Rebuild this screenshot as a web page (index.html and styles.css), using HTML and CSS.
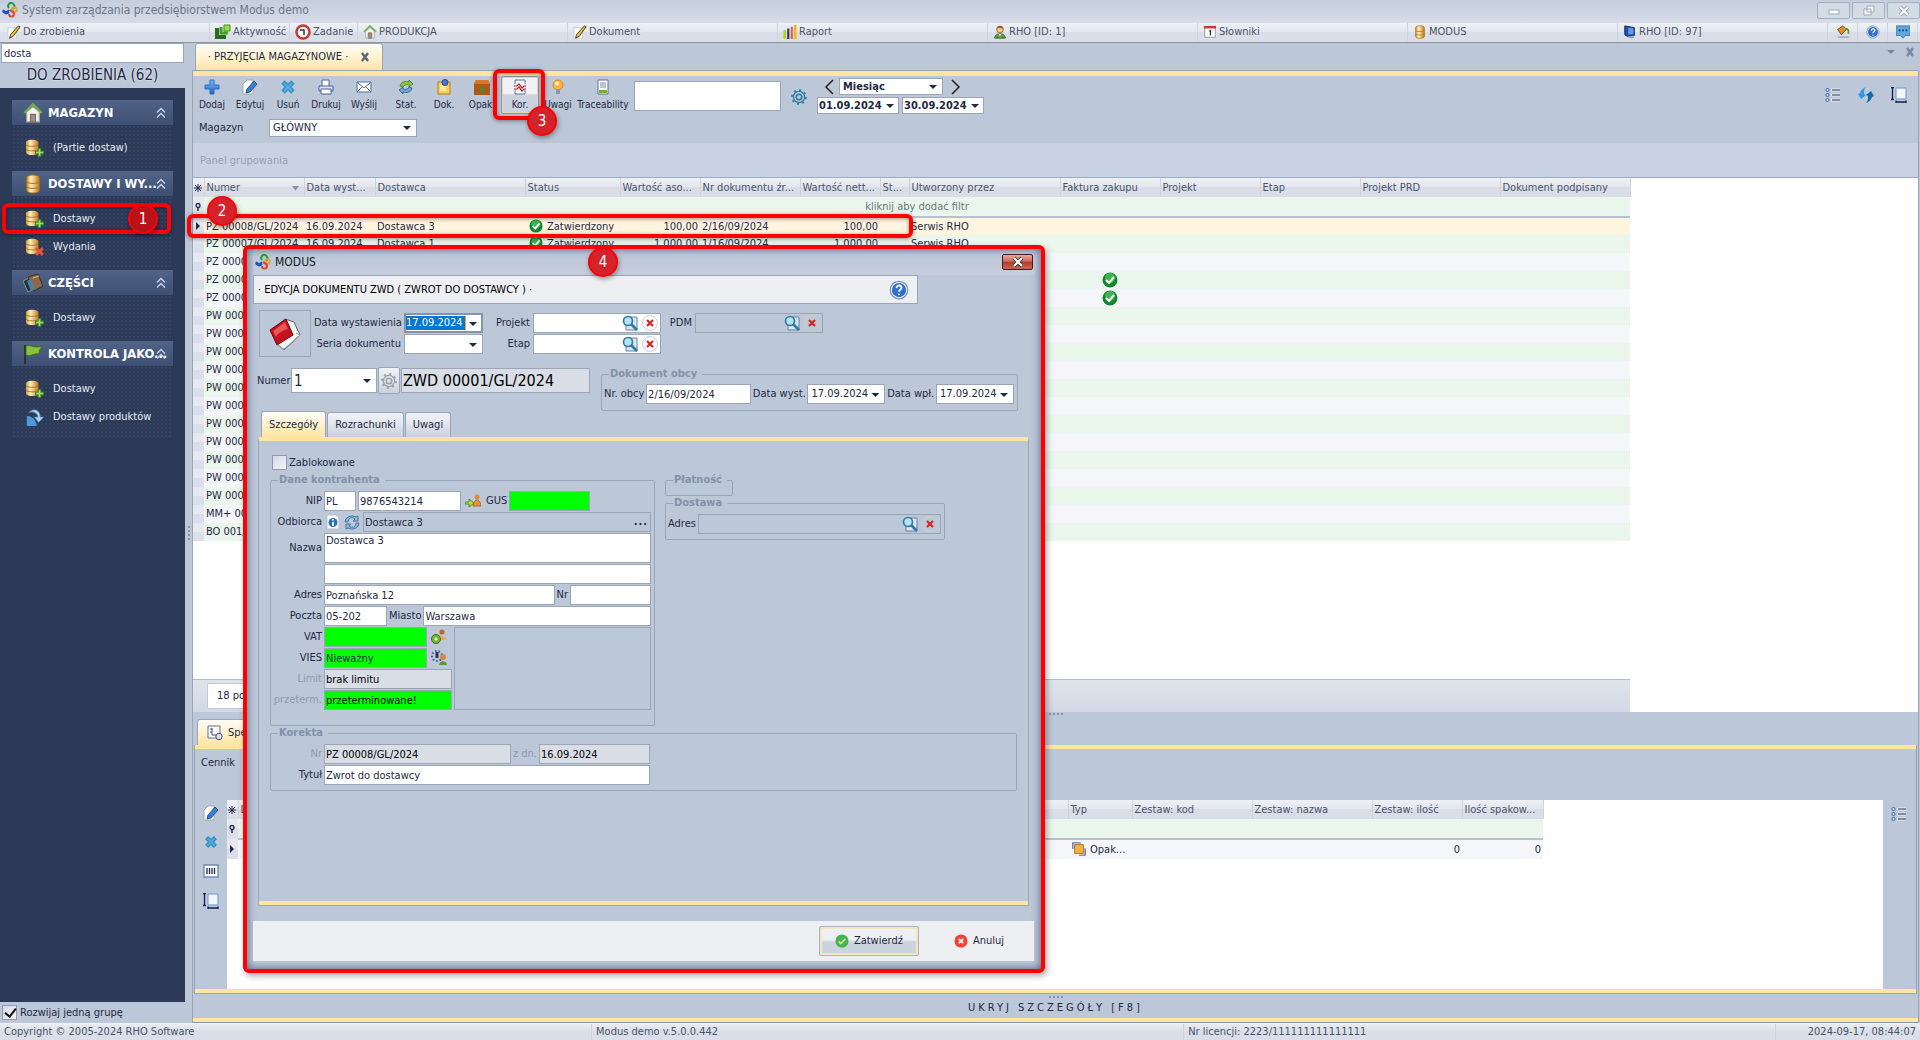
FILE: index.html
```html
<!DOCTYPE html>
<html lang="pl">
<head>
<meta charset="utf-8">
<title>System zarządzania przedsiębiorstwem Modus demo</title>
<link rel="stylesheet" href="styles.css">
</head>
<body>
<svg class="defs" aria-hidden="true">
  <defs>
    <linearGradient id="gold" x1="0" x2="1" y1="0" y2="0"><stop offset="0" stop-color="#d9952f"/><stop offset=".35" stop-color="#fff0bf"/><stop offset="1" stop-color="#c57a1a"/></linearGradient>
    <linearGradient id="blue" x1="0" x2="0" y1="0" y2="1"><stop offset="0" stop-color="#7cc0f5"/><stop offset="1" stop-color="#1c62c4"/></linearGradient>
  </defs>
  <symbol id="i-logo" viewBox="0 0 16 16"><g fill="none" stroke-width="2"><path d="M7 6a3 3 0 1 1 5-3c1 1 0 3-1 4" stroke="#1f9a3d"/><path d="M1 8c2 3 5 2 6 0" stroke="#1b4fc4"/><path d="M1 9c1 3 4 3 6 1" stroke="#1b4fc4"/><circle cx="12.500" cy="7.500" r="2.300" stroke="#e0a33a"/><path d="M7 12a2.500 2.500 0 1 0 5 0c0-2-2-3-4-4" stroke="#dd4b26"/></g></symbol>
  <symbol id="i-pen" viewBox="0 0 16 16"><path d="M1 3h10v12H1z" fill="#fbfbfb" stroke="#c8ccd4"/><path d="M13 1l2 1-8 11-4 2 1-4z" fill="#f0c22c" stroke="#2b2b2b"/></symbol>
  <symbol id="i-act" viewBox="0 0 16 16"><path d="M2 4v9h9" fill="none" stroke="#2c6a1d" stroke-width="4"/><path d="M6 3v6h7" fill="none" stroke="#459a2c" stroke-width="3"/><path d="M9 1h6v6H9z" fill="#9be04c" stroke="#3d8a22"/></symbol>
  <symbol id="i-clock" viewBox="0 0 16 16"><circle cx="8" cy="8" r="6.500" fill="#fff" stroke="#c33a32" stroke-width="2.500"/><path d="M5 6h4v5" fill="none" stroke="#333" stroke-width="1.500"/></symbol>
  <symbol id="i-house" viewBox="0 0 16 16"><path d="M3 7v8h10V7L8 3z" fill="#f6f6f6" stroke="#a9a9a9"/><path d="M1 8l7-7 7 7" fill="none" stroke="#6fae4a" stroke-width="1.800"/><path d="M6 9h4v6H6z" fill="#7d97ba" stroke="#a4662c"/></symbol>
  <symbol id="i-bars" viewBox="0 0 16 16"><path d="M2 6v10" stroke="#b5cf24" stroke-width="3"/><path d="M6 4v12" stroke="#333c4c" stroke-width="2.500"/><path d="M10 2v14" stroke="#e25b66" stroke-width="2.500"/><path d="M14 0v16" stroke="#f4b824" stroke-width="3"/></symbol>
  <symbol id="i-user" viewBox="0 0 16 16"><path d="M2 15c0-4 3-5 6-5s6 1 6 5z" fill="#5d9a3a" stroke="#336b1d"/><path d="M6 10l2 3 2-3z" fill="#fff"/><circle cx="8" cy="5" r="3.800" fill="#f4c99a" stroke="#8f5a1e"/><path d="M4 4c1-4 7-4 8 0-3 0-5-1-8 0z" fill="#9c6220"/></symbol>
  <symbol id="i-cal" viewBox="0 0 16 16"><path d="M2 2h12v12H2z" fill="#fff" stroke="#8b93a5"/><path d="M1 1h14v3H1z" fill="#cc3b33"/><path d="M7 7l1.500-.500V12" fill="none" stroke="#333" stroke-width="1.500"/></symbol>
  <symbol id="i-db" viewBox="0 0 16 16"><path d="M3 3c0-3 10-3 10 0v10c0 3-10 3-10 0z" fill="url(#gold)" stroke="#a86c18" stroke-width=".8"/><path d="M3 6c0 2 10 2 10 0M3 10c0 2 10 2 10 0" fill="none" stroke="#a86c18" stroke-width=".8"/></symbol>
  <symbol id="i-dbadd" viewBox="0 0 16 16"><path d="M0 3c0-3 11-3 11 0v9c0 3-11 3-11 0z" fill="url(#gold)"/><path d="M0 5c0 2 11 2 11 0M0 9c0 2 11 2 11 0" fill="none" stroke="#9a6519" stroke-width=".7"/><path d="M12 8v8M8 12h8" stroke="#3f8b22" stroke-width="3"/><path d="M12 9v6M9 12h6" stroke="#a4dc6a" stroke-width="1.400"/></symbol>
  <symbol id="i-dbdel" viewBox="0 0 16 16"><path d="M0 3c0-3 11-3 11 0v9c0 3-11 3-11 0z" fill="url(#gold)"/><path d="M0 5c0 2 11 2 11 0M0 9c0 2 11 2 11 0" fill="none" stroke="#9a6519" stroke-width=".7"/><path d="M9 9l6 6M15 9l-6 6" stroke="#e0553d" stroke-width="2.600"/></symbol>
  <symbol id="i-monitor" viewBox="0 0 16 16"><path d="M2 1l11 2v9L5 13 2 11z" fill="#1d4fb0" stroke="#1b2540"/><path d="M6 3l6 1v6l-6 1z" fill="#5f9df0"/><path d="M6 13l6-1 1 3H7z" fill="#9aa4b5"/></symbol>
  <symbol id="i-paint" viewBox="0 0 16 16"><path d="M2 5l6-4 4 4-6 6z" fill="#e38a2d" stroke="#7d4514"/><path d="M11 4c3 0 4 3 3 6" fill="none" stroke="#4f9a2e" stroke-width="2"/><path d="M2 14h13" stroke="#a9acb4" stroke-width="2"/></symbol>
  <symbol id="i-helpo" viewBox="0 0 16 16"><circle cx="8" cy="8" r="7" fill="#eef3fb" stroke="#7c93b5"/><circle cx="8" cy="8" r="5.700" fill="#2f70cf"/><path d="M6 6.500c0-3 4.500-2.500 4 0-.200 1.200-2 1.300-2 2.800M8 11v1" fill="none" stroke="#fff" stroke-width="1.500"/></symbol>
  <symbol id="i-chat" viewBox="0 0 16 16"><path d="M0 1h16v11h-5l-3 3-3-3H0z" fill="#5ea6dc" stroke="#3277b4"/><path d="M3 6h2M7 6h2M11 6h2" stroke="#14406e" stroke-width="2"/></symbol>
  <symbol id="i-plus" viewBox="0 0 16 16"><path d="M6 1h4v5h5v4h-5v5H6v-5H1V6h5z" fill="url(#blue)" stroke="#2a6ac6"/></symbol>
  <symbol id="i-edit" viewBox="0 0 16 16"><path d="M1 5l4-4h6v14H1z" fill="#fcfcfd" stroke="#a3a9b6"/><path d="M12 2l3 3-7 8-4 1 1-4z" fill="#2e83dc" stroke="#2b3a55" stroke-width=".8"/></symbol>
  <symbol id="i-del" viewBox="0 0 16 16"><path d="M3 3l10 10M13 3L3 13" stroke="#3392c8" stroke-width="5"/><path d="M4 4l8 8M12 4l-8 8" stroke="#52aedd" stroke-width="2"/></symbol>
  <symbol id="i-print" viewBox="0 0 16 16"><path d="M4 1h7v7H4z" fill="#fff" stroke="#5168a0"/><path d="M1 7h14v5H1z" fill="#dfe5f2" stroke="#4c5f94"/><path d="M3 10h10v5H3z" fill="#fff" stroke="#4c5f94"/></symbol>
  <symbol id="i-mail" viewBox="0 0 16 16"><path d="M1 3h14v10H1z" fill="#fafcff" stroke="#5670ad"/><path d="M1 3l7 6 7-6M1 13l5-5M15 13l-5-5" fill="none" stroke="#5670ad"/></symbol>
  <symbol id="i-stat" viewBox="0 0 16 16"><path d="M2 7c1-5 6-5 9-4V1l4 4-4 3V6C8 5 6 6 5 8z" fill="#8dc63f" stroke="#3f7d22" stroke-width=".8"/><path d="M14 9c-1 5-6 5-9 4v2l-4-4 4-3v2c3 1 5 0 6-2z" fill="#6ea5cf" stroke="#2a5f8c" stroke-width=".8"/></symbol>
  <symbol id="i-note" viewBox="0 0 16 16"><path d="M2 3h12v12H2z" fill="#fbd05a" stroke="#b9781a"/><path d="M4 6h6v6H4z" fill="#fde79a"/><circle cx="9" cy="3.500" r="3" fill="#4b79c4" stroke="#26467f"/></symbol>
  <symbol id="i-box" viewBox="0 0 16 16"><path d="M2 1h12l2 4v11H0V5z" fill="#b0581c"/><path d="M2 1h12l2 4H0z" fill="#d97a2b"/><path d="M8 7v5M6 10l2 3 2-3" stroke="#39962a" stroke-width="1.800" fill="none"/></symbol>
  <symbol id="i-kor" viewBox="0 0 16 16"><path d="M3 1h10v14H3z" fill="#fff" stroke="#5a6fa5"/><path d="M0 5h16v6H0z" fill="#f1f3f8"/><path d="M2 7h3l2-2 3 4 2-2h2M2 10h3l2-2 3 4 2-2h2" fill="none" stroke="#b4242a" stroke-width="1.200"/></symbol>
  <symbol id="i-bulb" viewBox="0 0 16 16"><circle cx="8" cy="6" r="5" fill="#fbb73c" stroke="#dd8a1c"/><circle cx="7" cy="4.500" r="2" fill="#fff1c4"/><path d="M6 10h4v5H6z" fill="#8c95a5"/></symbol>
  <symbol id="i-trace" viewBox="0 0 16 16"><path d="M3 1h10v14H3z" fill="#fff" stroke="#5a6fa5"/><path d="M5 4h6M5 6h6M5 8h6" stroke="#7d88a2"/><path d="M4 11h8v3H4z" fill="#6fb52d"/></symbol>
  <symbol id="i-gear" viewBox="0 0 16 16"><g fill="none" stroke="currentColor"><circle cx="8" cy="8" r="7" stroke-width="1.800" stroke-dasharray="2 3.500"/><circle cx="8" cy="8" r="5.600" stroke-width="1.200"/><circle cx="8" cy="8" r="2.800" stroke-width="1.500"/></g></symbol>
  <symbol id="i-list" viewBox="0 0 16 16"><g fill="#cfe4fa" stroke="#3d68b0"><circle cx="2.500" cy="3" r="1.600"/><circle cx="2.500" cy="8" r="1.600"/><circle cx="2.500" cy="13" r="1.600"/></g><path d="M6 3h9M6 8h9M6 13h9" stroke="#e9eef6" stroke-width="3"/><path d="M7 3h8M7 8h8M7 13h8" stroke="#222c4a" stroke-width="1.200"/></symbol>
  <symbol id="i-refresh" viewBox="0 0 16 16"><path d="M8 0C5 1 3 3 2 6L0 7l3 5 5-4-2-1c0-3 0-5 2-7z" fill="#2f9bdc"/><path d="M8 16c3-1 5-3 6-6l2-1-3-5-5 4 2 1c0 3 0 5-2 7z" fill="#1468ae"/></symbol>
  <symbol id="i-size" viewBox="0 0 16 16"><path d="M5 1h10v11H5z" fill="#eff6ff" stroke="#6c94d0"/><path d="M1.500 1v11M0 .500h3M0 12.500h3M5 15h10M5 13.500v3M15 13.500v3" stroke="#10204e" stroke-width="1.300"/></symbol>
  <symbol id="i-ok" viewBox="0 0 16 16"><circle cx="8" cy="8" r="7.500" fill="#12862f"/><circle cx="8" cy="6" r="5" fill="#3fb550"/><path d="M4 8l3 3 5-6" fill="none" stroke="#fff" stroke-width="2"/></symbol>
  <symbol id="i-okflat" viewBox="0 0 16 16"><circle cx="8" cy="8" r="7.500" fill="#4caf50"/><path d="M4 8.500l2.500 2.500L12 5.500" fill="none" stroke="#d5f59a" stroke-width="1.800"/></symbol>
  <symbol id="i-noflat" viewBox="0 0 16 16"><circle cx="8" cy="8" r="7.500" fill="#f44336"/><path d="M5.500 5.500l5 5M10.500 5.500l-5 5" stroke="#fff" stroke-width="2"/></symbol>
  <symbol id="i-find" viewBox="0 0 16 16"><path d="M4 2h11v13H4z" fill="#dbe6f2" stroke="#68829e"/><circle cx="6" cy="6" r="4.500" fill="#b8e2f2" stroke="#2f7aa4" stroke-width="1.700"/><path d="M9 9l6 6" stroke="#2a7ba6" stroke-width="2.600"/></symbol>
  <symbol id="i-clear" viewBox="0 0 16 16"><circle cx="8" cy="8" r="7.400" fill="none" stroke="#cfcfcf"/><path d="M5 5l6 6M11 5l-6 6" stroke="#dc2323" stroke-width="2.200"/></symbol>
  <symbol id="i-book" viewBox="0 0 32 32"><path d="M2 13L8 26l7 6 16-15L25 4 16 1z" fill="#f7f7f7" stroke="#666"/><path d="M1 12L17 1l7 16L8 27z" fill="#c4121c" stroke="#6e0a10"/><path d="M4 13L16 4l3 7C14 12 9 15 7 19z" fill="#e8555a"/><path d="M8 27l7 4L31 17l-4-2" fill="none" stroke="#9b9b9b"/></symbol>
  <symbol id="i-bookcase" viewBox="0 0 20 18"><path d="M0 7l6-3 5 11-6 3z" fill="#23303e" stroke="#8494a4"/><path d="M5 3l10-3 5 12-9 5z" fill="#8b6848" stroke="#3e2d1e"/><path d="M4 7l4-2 4 10-4 2z" fill="#4e7fa8"/><path d="M10 4l6-2" stroke="#d8b98f"/></symbol>
  <symbol id="i-flag" viewBox="0 0 20 20"><path d="M2 1v19" stroke="#2a3326" stroke-width="2"/><path d="M3 2c5-2 7 3 16 0-2 4-3 4-3 8-6-1-7 3-13 1z" fill="#8cc243" stroke="#41711c"/></symbol>
  <symbol id="i-prod" viewBox="0 0 20 20"><path d="M1 9c6 0 10 4 11 11H1z" fill="#4f98dc"/><path d="M3 5c5-6 13-3 13 5h4l-6 6-5-6h4c0-4-5-7-10-5z" fill="#a9d2f1" stroke="#3c77ad" stroke-width=".8"/></symbol>
  <symbol id="i-info" viewBox="0 0 16 16"><path d="M2 1h9l3 3v11H2z" fill="#fff" stroke="#b9bfca"/><circle cx="8" cy="8.500" r="4.500" fill="#2c6fc4"/><path d="M8 8v4M8 5v1.500" stroke="#fff" stroke-width="2"/></symbol>
  <symbol id="i-sync" viewBox="0 0 16 16"><path d="M1 8a7 6 0 0 1 11-5l2-1v5H9l2-2a4 4 0 0 0-7 3zM15 9a7 6 0 0 1-11 5l-2 1v-5h5l-2 2a4 4 0 0 0 7-3z" fill="#8bb8dd" stroke="#2f6794" stroke-width=".8"/></symbol>
  <symbol id="i-guser" viewBox="0 0 16 16"><path d="M0 9h4V6l5 4-5 4v-3H0z" fill="#b6dc38" stroke="#3f7d22" stroke-width=".8"/><circle cx="12" cy="4" r="2.500" fill="#dc8a3c"/><path d="M8 13c0-3 2-6 4-6s4 3 4 6z" fill="#e0953c" stroke="#a35a17" stroke-width=".8"/></symbol>
  <symbol id="i-vat" viewBox="0 0 16 16"><circle cx="5" cy="10" r="4.500" fill="#74b436" stroke="#38701a"/><circle cx="5" cy="10" r="1.600" fill="#dff5c0"/><circle cx="11" cy="3" r="2.500" fill="#b86726"/><path d="M8 6l8 4-5 1z" fill="#f0a23c"/></symbol>
  <symbol id="i-vies" viewBox="0 0 16 16"><circle cx="6" cy="6" r="5" fill="none" stroke="#34548f" stroke-dasharray="1.500 2" stroke-width="2"/><path d="M6 2v6" stroke="#2c3558" stroke-width="3"/><circle cx="12" cy="7" r="3" fill="#d98843"/><path d="M8 15c0-5 8-5 8 0z" fill="#5a9a35"/></symbol>
  <symbol id="i-pack" viewBox="0 0 16 16"><path d="M1 8V1h9M15 7v8H8" fill="none" stroke="#6476a8" stroke-width="1.600"/><path d="M3 3h10v10H3z" fill="#f3b43c" stroke="#b06517"/></symbol>
  <symbol id="i-code" viewBox="0 0 16 14"><path d="M1 1h14v12H1z" fill="#fff" stroke="#7186b5" stroke-width="1.300"/><path d="M4 4v6M6.500 4v6M9 4v6M11.500 4v6" stroke="#1e2c50" stroke-width="1.300"/></symbol>
  <symbol id="i-spec" viewBox="0 0 16 16"><path d="M1 1h12v12H1z" fill="#fff" stroke="#5e7095"/><path d="M5 3v7h5M3 4h2M3 7h2" fill="none" stroke="#3e4f78"/><circle cx="12" cy="11.500" r="3.200" fill="#d7e0ee" stroke="#3e4f78"/></symbol>
  <symbol id="i-x" viewBox="0 0 10 10"><path d="M2 1l6 8M8 1L2 9" stroke="currentColor" stroke-width="2.400"/></symbol>
  <symbol id="i-chev" viewBox="0 0 10 12"><path d="M1 5.500L5 1.500l4 4M1 10.500L5 6.500l4 4" fill="none" stroke="#c4cfe4" stroke-width="1.500"/></symbol>
  <symbol id="i-star" viewBox="0 0 8 8"><path d="M4 0v8M0 4h8M1 1l6 6M7 1L1 7" stroke="#1f2a44" stroke-width="1"/></symbol>
  <symbol id="i-pin" viewBox="0 0 8 8"><circle cx="4" cy="2.500" r="2" fill="none" stroke="#1f2a44" stroke-width="1.300"/><path d="M4 4v4" stroke="#1f2a44" stroke-width="1.500"/></symbol>
  <symbol id="i-cur" viewBox="0 0 8 8"><path d="M2 0l4 4-4 4z" fill="#1f2a44"/></symbol>
</svg>

<header class="titlebar">
  <svg class="i16"><use href="#i-logo"/></svg>
  <h1>System zarządzania przedsiębiorstwem Modus demo</h1>
  <div class="winbtns">
    <button type="button" aria-label="Minimalizuj"><svg width="12" height="12"><rect x="1" y="5" width="10" height="4" fill="#fff" stroke="#9aa5b6"/></svg></button>
    <button type="button" aria-label="Przywróć"><svg width="12" height="12"><path d="M4 1h7v6H4zM1 4h7v6H1z" fill="#fff" stroke="#9aa5b6"/></svg></button>
    <button type="button" aria-label="Zamknij"><svg width="12" height="12"><path d="M2 2l8 8M10 2l-8 8" stroke="#9aa5b6" stroke-width="4"/><path d="M2 2l8 8M10 2l-8 8" stroke="#fff" stroke-width="2"/></svg></button>
  </div>
</header>

<nav class="menu">
  <a class="m-todo" href="#"><svg class="i14"><use href="#i-pen"/></svg>Do zrobienia</a>
  <a class="m-act" href="#"><svg class="i16"><use href="#i-act"/></svg>Aktywność</a>
  <a class="m-task" href="#"><svg class="i16"><use href="#i-clock"/></svg>Zadanie</a>
  <a class="m-prod" href="#"><svg class="i14"><use href="#i-house"/></svg>PRODUKCJA</a>
  <a class="m-wide" href="#"><svg class="i14"><use href="#i-pen"/></svg>Dokument</a>
  <a class="m-wide" href="#"><svg class="i14"><use href="#i-bars"/></svg>Raport</a>
  <a class="m-wide" href="#"><svg class="i14"><use href="#i-user"/></svg>RHO [ID: 1]</a>
  <a class="m-wide" href="#"><svg class="i14"><use href="#i-cal"/></svg>Słowniki</a>
  <a class="m-wide" href="#"><svg class="i14"><use href="#i-db"/></svg>MODUS</a>
  <a class="m-wide" href="#"><svg class="i14"><use href="#i-monitor"/></svg>RHO [ID: 97]</a>
  <a class="m-ico" href="#" aria-label="Motyw"><svg class="i14"><use href="#i-paint"/></svg></a>
  <a class="m-ico" href="#" aria-label="Pomoc"><svg class="i14"><use href="#i-helpo"/></svg></a>
  <a class="m-ico" href="#" aria-label="Czat"><svg class="i14"><use href="#i-chat"/></svg></a>
</nav>

<div class="workspace">
  <aside class="sidebar">
    <input class="search" type="text" value="dosta" aria-label="Szukaj">
    <h2 class="todo">DO ZROBIENIA (62)</h2>
    <div class="navbox">
      <section class="group">
        <h3><svg class="i20"><use href="#i-house"/></svg><span>MAGAZYN</span><svg class="chev"><use href="#i-chev"/></svg></h3>
        <div class="items"><a href="#"><svg class="i18"><use href="#i-dbadd"/></svg>(Partie dostaw)</a></div>
      </section>
      <section class="group">
        <h3><svg class="i20"><use href="#i-db"/></svg><span>DOSTAWY I WY...</span><svg class="chev"><use href="#i-chev"/></svg></h3>
        <div class="items"><a href="#"><svg class="i18"><use href="#i-dbadd"/></svg>Dostawy</a><a href="#"><svg class="i18"><use href="#i-dbdel"/></svg>Wydania</a></div>
      </section>
      <section class="group">
        <h3><svg class="i20"><use href="#i-bookcase"/></svg><span>CZĘŚCI</span><svg class="chev"><use href="#i-chev"/></svg></h3>
        <div class="items"><a href="#"><svg class="i18"><use href="#i-dbadd"/></svg>Dostawy</a></div>
      </section>
      <section class="group">
        <h3><svg class="i20"><use href="#i-flag"/></svg><span>KONTROLA JAKO...</span><svg class="chev"><use href="#i-chev"/></svg></h3>
        <div class="items"><a href="#"><svg class="i18"><use href="#i-dbadd"/></svg>Dostawy</a><a href="#"><svg class="i18"><use href="#i-prod"/></svg>Dostawy produktów</a></div>
      </section>
    </div>
    <label class="onegroup"><input type="checkbox" checked>Rozwijaj jedną grupę</label>
  </aside>
  <div class="vsplit"><i></i></div>

  <main class="main">
    <div class="tabstrip">
      <button class="maintab" type="button">· PRZYJĘCIA MAGAZYNOWE · <svg class="i10"><use href="#i-x"/></svg></button>
      <div class="striptools"><i class="arrow"></i><svg class="i10"><use href="#i-x"/></svg></div>
    </div>
    <div class="page">
      <div class="toolbar">
        <div class="tools">
          <button type="button"><svg class="i16"><use href="#i-plus"/></svg>Dodaj</button>
          <button type="button"><svg class="i16"><use href="#i-edit"/></svg>Edytuj</button>
          <button type="button"><svg class="i16"><use href="#i-del"/></svg>Usuń</button>
          <button type="button"><svg class="i16"><use href="#i-print"/></svg>Drukuj</button>
          <button type="button"><svg class="i16"><use href="#i-mail"/></svg>Wyślij</button>
          <button type="button" class="sep"><svg class="i16"><use href="#i-stat"/></svg>Stat.</button>
          <button type="button"><svg class="i16"><use href="#i-note"/></svg>Dok.</button>
          <button type="button"><svg class="i16"><use href="#i-box"/></svg>Opak.</button>
          <button type="button" class="hot"><svg class="i16"><use href="#i-kor"/></svg>Kor.</button>
          <button type="button"><svg class="i16"><use href="#i-bulb"/></svg>Uwagi</button>
          <button type="button" class="trace"><svg class="i16"><use href="#i-trace"/></svg>Traceability</button>
        </div>
        <textarea class="quick" aria-label="Filtr"></textarea>
        <button type="button" class="gearbtn" aria-label="Ustawienia"><svg class="i16"><use href="#i-gear"/></svg></button>
        <div class="period">
          <div class="prow">
            <button type="button" aria-label="Poprzedni"><svg width="10" height="16"><path d="M9 1L2 8l7 7" fill="none" stroke="#222" stroke-width="1.500"/></svg></button>
            <span class="combo month"><select aria-label="Okres"><option>Miesiąc</option></select></span>
            <button type="button" class="next" aria-label="Następny"><svg width="10" height="16"><path d="M1 1l7 7-7 7" fill="none" stroke="#222" stroke-width="1.500"/></svg></button>
          </div>
          <div class="drow">
            <span class="combo"><select aria-label="Od"><option>01.09.2024</option></select></span>
            <span class="combo"><select aria-label="Do"><option>30.09.2024</option></select></span>
          </div>
        </div>
        <div class="righttools">
          <button type="button" aria-label="Kolumny"><svg class="i16"><use href="#i-list"/></svg></button>
          <button type="button" aria-label="Odśwież"><svg class="i16"><use href="#i-refresh"/></svg></button>
          <button type="button" aria-label="Dopasuj"><svg class="i16"><use href="#i-size"/></svg></button>
        </div>
      </div>
      <div class="storebar">
        <label for="mag">Magazyn</label>
        <span class="combo store"><select id="mag"><option>GŁÓWNY</option></select></span>
      </div>
      <div class="grouppanel">Panel grupowania</div>
      <div class="gridbox">
        <table class="grid docs">
          <colgroup><col class="c11"><col class="c100"><col class="c71"><col class="c150"><col class="c95"><col class="c80"><col class="c100"><col class="c80"><col class="c29"><col class="c151"><col class="c100"><col class="c100"><col class="c100"><col class="c140"><col class="c130"></colgroup>
          <thead>
            <tr><th><svg class="i8"><use href="#i-star"/></svg></th><th class="sorted">Numer</th><th>Data wyst...</th><th>Dostawca</th><th>Status</th><th>Wartość aso...</th><th>Nr dokumentu źr...</th><th>Wartość nett...</th><th>St...</th><th>Utworzony przez</th><th>Faktura zakupu</th><th>Projekt</th><th>Etap</th><th>Projekt PRD</th><th>Dokument podpisany</th></tr>
            <tr class="filter"><td><svg class="i8"><use href="#i-pin"/></svg></td><td colspan="14">kliknij aby dodać filtr</td></tr>
          </thead>
          <tbody>
            <tr class="cur"><td><svg class="i8"><use href="#i-cur"/></svg></td><td>PZ 00008/GL/2024</td><td>16.09.2024</td><td>Dostawca 3</td><td><svg class="i14"><use href="#i-ok"/></svg>Zatwierdzony</td><td class="num">100,00</td><td>2/16/09/2024</td><td class="num">100,00</td><td></td><td>Serwis RHO</td><td></td><td></td><td></td><td></td><td></td></tr>
            <tr><td></td><td>PZ 00007/GL/2024</td><td>16.09.2024</td><td>Dostawca 1</td><td><svg class="i14"><use href="#i-ok"/></svg>Zatwierdzony</td><td class="num">1 000,00</td><td>1/16/09/2024</td><td class="num">1 000,00</td><td></td><td>Serwis RHO</td><td></td><td></td><td></td><td></td><td></td></tr>
            <tr><td></td><td>PZ 0000</td><td colspan="13"></td></tr>
            <tr><td></td><td>PZ 0000</td><td colspan="8"></td><td class="mid"><svg class="i16"><use href="#i-ok"/></svg></td><td colspan="4"></td></tr>
            <tr><td></td><td>PZ 0000</td><td colspan="8"></td><td class="mid"><svg class="i16"><use href="#i-ok"/></svg></td><td colspan="4"></td></tr>
            <tr><td></td><td>PW 000</td><td colspan="13"></td></tr>
            <tr><td></td><td>PW 000</td><td colspan="13"></td></tr>
            <tr><td></td><td>PW 000</td><td colspan="13"></td></tr>
            <tr><td></td><td>PW 000</td><td colspan="13"></td></tr>
            <tr><td></td><td>PW 000</td><td colspan="13"></td></tr>
            <tr><td></td><td>PW 000</td><td colspan="13"></td></tr>
            <tr><td></td><td>PW 000</td><td colspan="13"></td></tr>
            <tr><td></td><td>PW 000</td><td colspan="13"></td></tr>
            <tr><td></td><td>PW 000</td><td colspan="13"></td></tr>
            <tr><td></td><td>PW 000</td><td colspan="13"></td></tr>
            <tr><td></td><td>PW 000</td><td colspan="13"></td></tr>
            <tr><td></td><td>MM+ 00</td><td colspan="13"></td></tr>
            <tr><td></td><td>BO 001/</td><td colspan="13"></td></tr>
          </tbody>
        </table>
        <div class="gridfoot"><span>18 po</span></div>
      </div>
      <div class="hsplit"><i></i></div>
      <div class="dtabs"><button type="button"><svg class="i16"><use href="#i-spec"/></svg>Spe</button></div>
      <section class="detail">
        <div class="pricelist">Cennik</div>
        <div class="dbody">
          <div class="dtools">
            <button type="button" aria-label="Edytuj"><svg class="i16"><use href="#i-edit"/></svg></button>
            <button type="button" aria-label="Usuń"><svg class="i14"><use href="#i-del"/></svg></button>
            <button type="button" aria-label="Kod"><svg class="i16"><use href="#i-code"/></svg></button>
            <button type="button" aria-label="Dopasuj"><svg class="i16"><use href="#i-size"/></svg></button>
          </div>
          <div class="dgrid">
            <table class="grid">
              <colgroup><col class="c11"><col class="c774"><col class="c55"><col class="c64"><col class="c120"><col class="c120"><col class="c90"><col class="c81"></colgroup>
              <thead>
                <tr><th><svg class="i8"><use href="#i-star"/></svg></th><th>L</th><th>Kwo...</th><th>Typ</th><th>Zestaw: kod</th><th>Zestaw: nazwa</th><th>Zestaw: ilość</th><th>Ilość spakow...</th></tr>
                <tr class="filter"><td><svg class="i8"><use href="#i-pin"/></svg></td><td colspan="7"></td></tr>
              </thead>
              <tbody><tr class="line"><td><svg class="i8"><use href="#i-cur"/></svg></td><td></td><td></td><td><svg class="i14"><use href="#i-pack"/></svg>Opak...</td><td></td><td></td><td class="num">0</td><td class="num">0</td></tr></tbody>
            </table>
          </div>
          <div class="dright"><button type="button" aria-label="Kolumny"><svg class="i16"><use href="#i-list"/></svg></button></div>
        </div>
      </section>
      <button type="button" class="hide"><i></i>UKRYJ SZCZEGÓŁY [F8]</button>
    </div>
  </main>
</div>

<footer class="status"><span>Copyright © 2005-2024 RHO Software</span><span>Modus demo v.5.0.0.442</span><span>Nr licencji: 2223/111111111111111</span><span class="clock">2024-09-17, 08:44:07</span></footer>

<div class="mark rowmark"></div><b class="dot dot2">2</b>
<div class="mark navmark"></div><b class="dot dot1">1</b>
<div class="mark toolmark"></div><b class="dot dot3">3</b>

<form class="dialog" role="dialog" aria-label="MODUS">
  <div class="dtitle"><svg class="i16"><use href="#i-logo"/></svg><h2>MODUS</h2><button type="button" aria-label="Zamknij"><svg width="12" height="12"><path d="M2 2l8 8M10 2l-8 8" stroke="#444" stroke-width="4"/><path d="M2 2l8 8M10 2l-8 8" stroke="#fff" stroke-width="2"/></svg></button></div>
  <div class="dhead"><span>· EDYCJA DOKUMENTU ZWD ( ZWROT DO DOSTAWCY ) ·</span><button type="button" aria-label="Pomoc"><svg class="i20"><use href="#i-helpo"/></svg></button></div>
  <div class="top">
    <div class="bookbox"><svg width="32" height="32"><use href="#i-book"/></svg></div>
    <div class="topgrid">
      <label for="dw">Data wystawienia</label><span class="combo focus"><input id="dw" value="17.09.2024"></span>
      <label for="pr">Projekt</label><span class="lookup"><input id="pr"><svg class="i16"><use href="#i-find"/></svg><svg class="i16"><use href="#i-clear"/></svg></span>
      <label for="pdm">PDM</label><span class="lookup off"><input id="pdm"><svg class="i16"><use href="#i-find"/></svg><svg class="i16"><use href="#i-clear"/></svg></span>
      <label for="sd">Seria dokumentu</label><span class="combo"><select id="sd"><option></option></select></span>
      <label for="et">Etap</label><span class="lookup"><input id="et"><svg class="i16"><use href="#i-find"/></svg><svg class="i16"><use href="#i-clear"/></svg></span>
    </div>
  </div>
  <div class="numrow">
    <div class="number">
      <label for="nu">Numer</label><span class="combo big"><select id="nu"><option>1</option></select></span>
      <button type="button" aria-label="Numeracja"><svg class="i16"><use href="#i-gear"/></svg></button>
      <input class="full" value="ZWD 00001/GL/2024" readonly aria-label="Pełny numer">
    </div>
    <fieldset class="foreign"><legend>Dokument obcy</legend>
      <div class="row"><label for="no">Nr. obcy</label><input id="no" class="w105" value="2/16/09/2024"><label for="d1">Data wyst.</label><span class="combo w78"><select id="d1"><option>17.09.2024</option></select></span><label for="d2">Data wpł.</label><span class="combo w78"><select id="d2"><option>17.09.2024</option></select></span></div>
    </fieldset>
  </div>
  <div class="tabs"><button type="button" class="on">Szczegóły</button><button type="button">Rozrachunki</button><button type="button">Uwagi</button></div>
  <div class="panel">
    <label class="block"><input type="checkbox">Zablokowane</label>
    <div class="cols">
      <fieldset class="party"><legend>Dane kontrahenta</legend>
        <div class="row"><label class="lab" for="nip">NIP</label><input class="w32" value="PL" aria-label="Kraj"><input id="nip" class="w103" value="9876543214"><svg class="i16 gap"><use href="#i-guser"/></svg><label for="gus">GUS</label><input id="gus" class="w81 green"></div>
        <div class="row buyer"><label class="lab" for="odb">Odbiorca</label><svg class="i16"><use href="#i-info"/></svg><svg class="i16"><use href="#i-sync"/></svg><span class="lookup off grow"><input id="odb" value="Dostawca 3"><b>...</b></span></div>
        <div class="row tall"><label class="lab" for="naz">Nazwa</label><textarea id="naz" class="grow">Dostawca 3</textarea></div>
        <div class="row"><span class="lab"></span><input class="grow" aria-label="Nazwa cd."></div>
        <div class="row"><label class="lab" for="adr">Adres</label><input id="adr" class="grow" value="Poznańska 12"><label for="nr">Nr</label><input id="nr" class="w81"></div>
        <div class="row"><label class="lab" for="poc">Poczta</label><input id="poc" class="w63" value="05-202"><label for="mia">Miasto</label><input id="mia" class="grow" value="Warszawa"></div>
        <div class="vatblock">
          <div class="vatrows">
            <div class="row"><label class="lab" for="vat">VAT</label><input id="vat" class="w103 green"><svg class="i16 gap"><use href="#i-vat"/></svg></div>
            <div class="row"><label class="lab" for="vies">VIES</label><input id="vies" class="w103 green" value="Nieważny"><svg class="i16 gap"><use href="#i-vies"/></svg></div>
            <div class="row"><label class="lab dim" for="lim">Limit</label><input id="lim" class="grow ro" value="brak limitu" readonly></div>
            <div class="row"><label class="lab dim" for="prz">przeterm.</label><input id="prz" class="grow green ro" value="przeterminowane!" readonly></div>
          </div>
          <div class="vatbox"></div>
        </div>
      </fieldset>
      <div class="rightcol">
        <fieldset class="pay"><legend>Płatność</legend></fieldset>
        <fieldset class="ship"><legend>Dostawa</legend><div class="row"><label for="da">Adres</label><span class="lookup off grow"><input id="da"><svg class="i16"><use href="#i-find"/></svg><svg class="i16"><use href="#i-clear"/></svg></span></div></fieldset>
      </div>
    </div>
    <fieldset class="corr"><legend>Korekta</legend>
      <div class="row"><label class="lab dim" for="kn">Nr</label><input id="kn" class="grow ro" value="PZ 00008/GL/2024" readonly><label class="dim" for="kd">z dn.</label><input id="kd" class="w111 ro" value="16.09.2024" readonly></div>
      <div class="row"><label class="lab" for="kt">Tytuł</label><input id="kt" class="grow" value="Zwrot do dostawcy"></div>
    </fieldset>
  </div>
  <div class="actions"><button type="button" class="confirm"><svg class="i14"><use href="#i-okflat"/></svg>Zatwierdź</button><button type="button" class="cancel"><svg class="i14"><use href="#i-noflat"/></svg>Anuluj</button></div>
</form>
<b class="dot dot4">4</b>
</body>
</html>
```
FILE: styles.css
```css
*{box-sizing:border-box}
html,body{margin:0;height:100%}
body{display:flex;flex-direction:column;height:100vh;overflow:hidden;position:relative;background:#bcc7d7;color:#1f2a44;font:11px/14px "DejaVu Sans Condensed","DejaVu Sans",sans-serif}
input,select,textarea,button{font:inherit;color:inherit;margin:0;border-radius:0}
button{background:none;border:0;padding:0;display:flex;align-items:center;justify-content:center}
input:not([type=checkbox]),textarea,select{background:#fff;border:1px solid #9aa5b7;padding:0 1px;height:20px;outline:0;min-width:0}
textarea{resize:none;overflow:hidden;padding:2px 1px}
select{appearance:none;width:100%;padding:0 3px}
h1,h2,h3{margin:0;font-weight:normal}
a{color:inherit;text-decoration:none}
svg{flex:none;display:block}
.defs{position:absolute;width:0;height:0}
.i8{width:8px;height:8px}.i10{width:10px;height:10px}.i14{width:14px;height:14px}.i16{width:16px;height:16px}.i18{width:18px;height:18px}.i20{width:20px;height:20px}

.combo{position:relative;display:flex;height:20px}
.combo::after,.arrow{content:"";width:8px;height:4px;background:#1f2a44;clip-path:polygon(0 0,100% 0,50% 100%)}
.combo::after{position:absolute;right:6px;top:9px}
.lookup{display:flex;align-items:center;gap:4px;height:20px;padding-right:2px;background:#fff;border:1px solid #9aa5b7;min-width:0}
.lookup input:not([type=checkbox]){flex:1;width:0;border:0;background:none;height:18px}
.lookup.off{background:#bcc7d7}

.titlebar{flex:none;height:23px;display:flex;align-items:flex-start;gap:4px;padding:2px 0 0 2px;background:linear-gradient(#c5cddc,#d6dce8)}
.titlebar h1{flex:1;font-size:12px;line-height:16px;color:#6a7689}
.winbtns{display:flex;gap:2px}
.winbtns button{width:33px;height:17px;background:#d3dce5;border:1px solid #a5b0c0;border-radius:2px}

.menu{flex:none;height:20px;display:flex;padding:0 2px 1px 2px;background:linear-gradient(#eceff3 0 1px,#e4e8ee 45%,#dadee8 50%,#dadee8);border-bottom:1px solid #8f949c;color:#4a5468}
.menu a{display:flex;align-items:center;gap:2px;padding-left:5px;border-right:1px solid #cdd3de;white-space:nowrap;min-width:0}
.m-todo{width:208px}.m-act{width:80px}.m-task{width:68px}.m-prod{width:210px}
.m-wide{flex:1}
.menu .m-ico{width:30px;justify-content:center;padding:0}

.workspace{flex:1;display:flex;min-height:0}
.sidebar{width:185px;flex:none;display:flex;flex-direction:column}
.sidebar .search{height:20px;margin:0 1px;padding:0 2px}
.todo{font-size:15px;line-height:25px;text-align:center;text-shadow:0 0 2px #fff}
.navbox{flex:1;background:#2c3a58;padding:12px 12px 0}
.group{margin-bottom:2px}
.group h3{display:flex;align-items:center;height:25px;padding:0 7px 0 11px;gap:5px;font-weight:bold;color:#fff;background:linear-gradient(#516488,#3d5074)}
.group h3 span{flex:1;min-width:0;white-space:nowrap}
.chev{width:10px;height:12px}
.items{padding:9px 0 7px 14px;color:#e6ebf5;background:radial-gradient(circle,#364566 25%,transparent 26%) 0 0/4px 4px}
.items a{display:flex;align-items:center;gap:9px;height:28px}
.onegroup{flex:none;height:21px;display:flex;align-items:center;gap:3px;padding-left:2px}
input[type=checkbox]{appearance:none;width:15px;height:15px;margin:0;border:1px solid #8e9ab0;background:linear-gradient(135deg,#d5dae4,#f4f5f8)}
input[type=checkbox]:checked::after{content:"";display:block;width:5px;height:9px;margin:0 0 0 4px;border:solid #111;border-width:0 2px 2px 0;transform:rotate(38deg)}
.vsplit{width:7px;flex:none;display:flex;align-items:center;justify-content:center}
.vsplit i{width:2px;height:14px;background:repeating-linear-gradient(#8493ad 0 2px,transparent 2px 4px)}

.main{flex:1;min-width:0;display:flex;flex-direction:column}
.tabstrip{flex:none;display:flex;justify-content:space-between;height:27px;padding-left:3px}
.maintab{width:188px;gap:12px;border:1px solid #9aa5b7;border-bottom:0;border-radius:3px 3px 0 0;background:linear-gradient(#fffdf7,#fff0cb 60%,#ffe5a0)}
.maintab svg{color:#5c6473}
.striptools{display:flex;gap:10px;padding:4px 5px;color:#7686a3}
.striptools .arrow{margin-top:3px;background:#7686a3}
.page{flex:1;min-height:0;display:flex;flex-direction:column;margin-right:1px;border:1px solid #9aa5b7;border-radius:0 3px 0 0;border-top:0;border-bottom-color:#8795b0}
.page::before{content:"";flex:none;height:5px;background:#ffe5a0;border-top:1px solid #9aa5b7}
.page::after{content:"";flex:none;height:4px;background:#ffe5a0}

.toolbar{flex:none;display:flex;height:43px;white-space:nowrap}
.tools{display:flex;height:38px;font-size:10px}
.tools button{width:38px;flex-direction:column;gap:3px}
.tools .sep{margin-left:4px}
.tools .trace{width:52px}
.tools .hot{border:2px solid #e8d9b0;outline:1px solid #8d95a5;outline-offset:-1px;border-radius:2px;background:linear-gradient(#f0f2f6 45%,#ccd2df 50%)}
.toolbar .quick{width:147px;height:30px;margin:5px 0 0 5px}
.gearbtn{width:30px;height:42px;margin-left:3px;color:#2b7ba6}
.period{font-weight:bold}
.prow,.drow{display:flex;align-items:center;gap:3px}
.period .combo,.period select{height:17px}
.period .combo::after{top:7px}
.prow{padding:2px 0 0 9px;margin-bottom:2px}
.prow button{margin:0 2px 0 1px}
.prow .next{margin-left:5px}
.month{width:104px}
.drow{padding-left:3px}
.drow .combo{width:82px}
.drow .combo::after{right:5px}
.drow select:not([type=checkbox]){padding:0 1px}
.righttools{margin-left:auto;display:flex;gap:17px;padding:0 11px 6px 0}
.storebar{flex:none;height:24px;display:flex;align-items:flex-start;padding-left:6px}
.storebar label{width:70px;line-height:18px}
.store{width:148px;height:18px}
.store select{height:18px}
.store::after{top:7px}
.grouppanel{flex:none;height:34px;padding-left:7px;line-height:36px;background:#c9d2e3;color:#96a1b6}
.gridbox{flex:1;min-height:0;display:flex;flex-direction:column;border-top:1px solid #9fabc0;background:#fff}
.grid{border-collapse:collapse;table-layout:fixed;width:0;white-space:nowrap}
.c11{width:11px}.c29{width:29px}.c55{width:56px}.c64{width:64px}.c71{width:71px}.c80{width:80px}.c81{width:81px}.c90{width:90px}.c95{width:95px}.c100{width:100px}.c120{width:120px}.c130{width:130px}.c140{width:140px}.c150{width:150px}.c151{width:151px}.c774{width:774px}
.grid th,.grid td{padding:0 2px;height:18px;line-height:16px;text-align:left;overflow:hidden;font-weight:normal}
.grid td svg,.grid th svg{display:inline-block;vertical-align:middle}
.grid td .i14{margin:-2px 4px 0 2px}
.grid .i8{margin-left:-1px}
.grid th{height:19px;color:#4a5468;background:linear-gradient(#eef0f4,#e2e6ed 48%,#d9dde8 50%);border-right:1px solid #ccd2de}
.sorted::after{content:"";float:right;width:8px;height:5px;margin:6px 2px 0 0;background:#8a94a8;clip-path:polygon(0 0,100% 0,50% 100%)}
.grid .filter td{height:20px;text-align:center;color:#6c7681;background:#eaf6ec;border-bottom:2px solid #b6c1d1}
.grid tbody tr:nth-child(odd) td{background:#f5f6fa}
.grid tbody tr:nth-child(even) td{background:#eaf6ec}
.grid tbody tr.cur td{background:#fff4de}
.grid tr td:first-child,.grid tbody tr:nth-child(n) td:first-child{background:linear-gradient(#e6e9f0 50%,#dadfe9 50%);border-bottom:0}
.grid .num{text-align:right}
.grid .mid{text-align:center}
.grid .line td{height:20px}
.gridfoot{flex:none;margin-top:auto;width:1437px;height:33px;padding:3px 14px;background:linear-gradient(#dfe4ec,#d3d9e5);border-top:1px solid #b3bccb}
.gridfoot span{display:flex;align-items:center;width:110px;height:26px;padding-left:9px;background:#fff;border:1px solid #c2c8d4;border-radius:2px}
.hsplit{flex:none;height:7px;display:flex;justify-content:center}
.hsplit i,.hide i{width:14px;height:2px;background:repeating-linear-gradient(90deg,#8493ad 0 2px,transparent 2px 4px)}
.hsplit i{margin-top:1px}
.dtabs{flex:none;height:26px;padding-left:4px}
.dtabs button{height:26px;width:120px;justify-content:flex-start;padding-left:9px;gap:5px;border:1px solid #9aa5b7;border-bottom:0;border-radius:3px 3px 0 0;background:linear-gradient(#fffdf7,#fff0cb 55%,#ffe5a0)}
.detail{flex:none;margin:0 1px;display:flex;flex-direction:column;border:1px solid #9aa5b7;border-top-width:0}
.detail::before,.detail::after{content:"";height:4px;background:#ffe5a0}
.pricelist{height:51px;padding:7px 6px}
.dbody{display:flex;height:189px}
.dtools{width:32px;display:flex;flex-direction:column;align-items:center;gap:14px;padding-top:5px}
.dgrid{flex:1;min-width:0;background:#fff}
.dright{width:33px;padding:6px 0 0 8px}
.hide{flex:none;height:24px;flex-direction:column;justify-content:flex-start;gap:3px;padding-top:2px;letter-spacing:3px}
.status{flex:none;height:17px;display:flex;line-height:15px;overflow:hidden;color:#4a5468;background:linear-gradient(#e9ecf1,#dadee8 50%);border-top:1px solid #f0f2f6}
.status span{flex:592;padding-left:4px;border-right:1px solid #ccd2de;white-space:nowrap}
.status .clock{flex:141;text-align:right;padding:0 4px 0 0;border:0}

.mark{position:absolute;border:4px solid #f00;border-radius:6px;box-shadow:0 1px 4px #0006,inset 0 1px 4px #0006}
.navmark{left:2px;top:203px;width:169px;height:31px}
.rowmark{left:187px;top:214px;width:726px;height:24px}
.toolmark{left:493px;top:69px;width:52px;height:51px}
.dot{position:absolute;width:30px;height:30px;border-radius:50%;border:2px solid #f00;background:#d4232b;color:#fff;font-size:15px;font-weight:normal;line-height:26px;text-align:center;box-shadow:1px 2px 5px #0006}
.dot1{left:128px;top:204px;background:#b9131a}
.dot2{left:207px;top:196px}
.dot3{left:527px;top:106px}
.dot4{left:588px;top:247px}

.dialog{position:absolute;left:243px;top:245px;width:802px;height:728px;display:flex;flex-direction:column;padding:0 7px 8px 6px;border:4px solid #f00;border-radius:6px;background:#bcc7d7;box-shadow:2px 3px 6px #0005,inset 0 0 8px #4a5a7a}
.dtitle{flex:none;height:26px;display:flex;align-items:center;gap:4px;padding:0 1px 0 2px;background:linear-gradient(#a9b4c800,#c5cddc)}
.dtitle h2{flex:1;font-size:12px;color:#14192a}
.dtitle button{width:31px;height:16px;border:1px solid #4c1720;border-radius:2px;background:linear-gradient(#e7a79a,#cf6a58 45%,#b23a28 50%,#c96856)}
.dhead{flex:none;width:665px;height:29px;display:flex;align-items:center;justify-content:space-between;padding:0 8px 0 4px;border:1px solid #9aa5b7;background:#eeeff3;color:#000}
.top{flex:none;display:flex;gap:3px;align-items:center;margin:6px 0 0 6px}
.bookbox{width:52px;height:47px;display:flex;align-items:center;justify-content:center;border:1px solid #9aa5b7}
.topgrid{display:grid;grid-template-columns:87px 79px 44px 128px 28px 128px;grid-auto-rows:20px;gap:1px 3px;align-items:center;text-align:right;white-space:nowrap}
.combo.focus{border:2px solid #8592aa;background:#fff;align-items:center}
.combo.focus::after{top:7px;right:4px}
.combo.focus input:not([type=checkbox]){width:60px;height:14px;padding:0;border:0;border-right:1px solid #f79a3e;background:#0078d7;color:#fff}
.numrow{flex:none;display:flex;justify-content:space-between;margin:10px 16px 0 4px}
.number{display:flex;align-items:center;gap:1px;height:27px}
.number label{width:33px}
.number .big{width:86px;height:25px}
.number select{height:25px;font-size:15px;padding:0 2px}
.number .big::after{top:11px}
.number button{width:22px;height:27px;border:1px solid #9aa5b7;border-radius:2px;background:linear-gradient(#f0f2f6,#ccd2df);color:#9aa0a8}
.number .full{width:189px;height:25px;font-size:16px;background:#d9dde6;color:#000}
fieldset{margin:0;min-width:0;padding:5px 3px 15px 0;border:1px solid #9aa5b7;border-radius:2px}
legend{margin-left:7px;padding:0 5px 0 1px;height:12px;line-height:12px;font-weight:bold;color:#8491aa}
.row{display:flex;align-items:center;gap:2px;height:20px;margin-bottom:1px;white-space:nowrap}
.row:last-child{margin-bottom:0}
.row.tall{height:30px}
.tall textarea{height:30px;padding:0 1px}
.foreign{width:417px;height:43px;margin-top:1px;padding:4px 3px 0 2px}
.foreign legend,.ship legend{margin-left:5px}
.foreign .row{justify-content:space-between;gap:0}
.lab{width:51px;text-align:right;flex:none}
.row>.grow{flex:1}
.row .w32{width:32px}.row .w63{width:63px}.row .w78{width:78px}.row .w81{width:81px}.row .w103{width:103px}.row .w105{width:105px}.row .w111{width:111px}
.row .gap{margin:0 3px 0 2px}
.buyer{gap:3px}
.green:not([type=checkbox]){background:#0f0}
.ro:not(.green){background:#d9dde6 !important}
.ro{color:#000 !important}
.dim{color:#8f9bb0}
.lookup b{letter-spacing:1px;line-height:8px}
.tabs{flex:none;display:flex;align-items:flex-end;gap:1px;height:26px;margin-left:8px}
.tabs button{height:25px;padding:0 7px;border:1px solid #9aa5b7;border-bottom:0;border-radius:3px 3px 0 0;background:linear-gradient(#f1f3f7,#dfe3ec 50%,#c9d0de)}
.tabs .on{height:26px;background:linear-gradient(#fffdf7,#fff0cb 55%,#ffe5a0)}
.panel{flex:1;display:flex;flex-direction:column;margin:0 5px 15px;border:1px solid #9aa5b7;border-radius:2px;padding:0 0 0 11px;border-top:4px solid #ffe5a0;box-shadow:inset 0 -4px #ffe5a0}
.block{display:flex;align-items:center;gap:2px;margin:14px 0 4px 2px}
.cols{display:flex;gap:10px;align-items:flex-start;margin-bottom:1px}
.party{width:385px}
.vatblock{display:flex;gap:2px}
.vatrows{width:181px}
.vatbox{flex:1;border:1px solid #9aa5b7}
.rightcol{display:flex;flex-direction:column;gap:1px}
.pay{width:68px;height:22px;padding:0}
.ship{width:280px;padding:5px 3px 5px 2px}
.corr{width:747px;padding:5px 366px 5px 0}
.actions{flex:none;height:40px;display:flex;align-items:center;justify-content:flex-end;gap:35px;padding-right:30px;background:#eeeff3}
.actions button{gap:5px}
.confirm{width:100px;height:30px;border:1px solid #a9b2c2;border-radius:2px;box-shadow:inset 0 0 0 2px #f4e6bf;background:linear-gradient(#eceff4 45%,#ccd2df 55%)}
```
